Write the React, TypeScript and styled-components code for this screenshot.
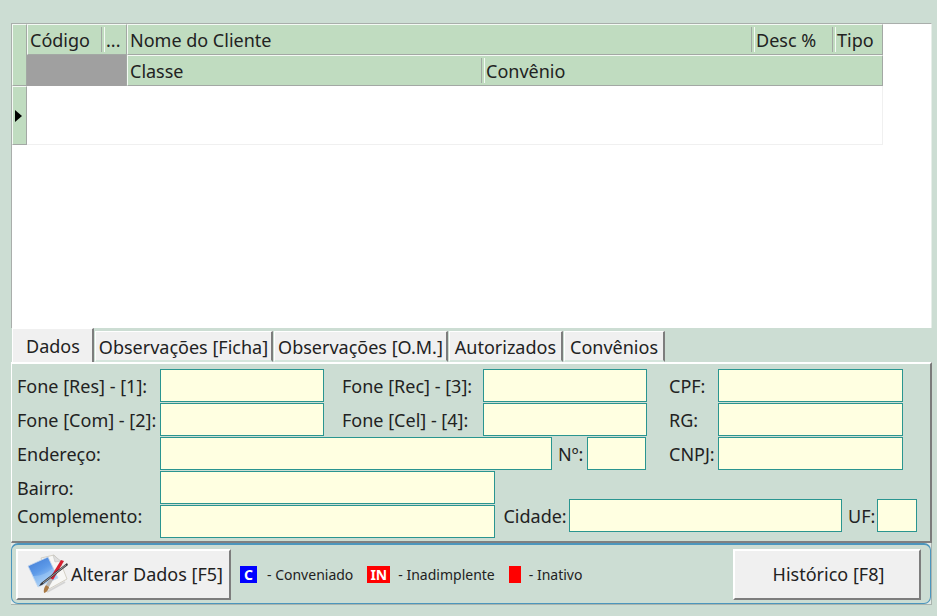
import React, { useState } from "react";
import styled, { createGlobalStyle } from "styled-components";

const GlobalStyle = createGlobalStyle`
  * { box-sizing: border-box; }
  body {
    margin: 0;
    background: #ccddd3;
    color: #222;
    font-family: "Noto Sans", "Open Sans", sans-serif;
    font-size: 18px;
    line-height: 24px;
  }
  button, input { font: inherit; color: inherit; }
`;

const Page = styled.main`
  display: flex;
  flex-direction: column;
  min-height: 100vh;
  padding: 23px 5px 11px 11px;
`;

const GridPanel = styled.section`
  flex: 1;
  min-height: 200px;
  background: #fff;
  border: 1px solid #a9aeab;
  border-right-color: #e6eee9;
  border-bottom: 0;
`;

const ClientTable = styled.table`
  width: calc(100% - 48px);
  table-layout: fixed;
  border-collapse: separate;
  border-spacing: 0;
`;

const Col = styled.col<{ $w?: number }>`
  width: ${(p) => (p.$w ? `${p.$w}px` : "auto")};
`;

const HeadCell = styled.th<{ $divider?: boolean; $last?: boolean }>`
  position: relative;
  height: 31px;
  padding: ${(p) => (p.$divider ? "0 4px" : "0 2px")};
  background: #c0dcc0;
  border-top: 1px solid #f4faf4;
  border-bottom: 1px solid #a3a8a4;
  border-left: ${(p) => (p.$divider ? "0" : "1px solid #f4faf4")};
  border-right: ${(p) => (p.$last ? "1px solid #a3a8a4" : "0")};
  font-weight: 400;
  text-align: left;
  white-space: nowrap;

  &::before {
    content: "";
    display: ${(p) => (p.$divider ? "block" : "none")};
    position: absolute;
    left: -1px;
    top: 2px;
    bottom: 2px;
    width: 2px;
    border-left: 1px solid #a3a8a4;
    border-right: 1px solid #f4faf4;
  }
`;

const BlankHead = styled.td`
  background: #a0a0a0;
  border-right: 1px solid #a3a8a4;
  padding: 0;
`;

const Indicator = styled.td`
  height: 59px;
  padding: 0 0 0 2px;
  background: #c0dcc0;
  border: 1px solid #a3a8a4;
  border-top-color: #f4faf4;
  border-left-color: #f4faf4;
  line-height: 0;
`;

const IndicatorHead = styled(Indicator)`
  height: 62px;
`;

const RecordCell = styled.td`
  padding: 0;
  border-right: 1px solid #f0f0f0;
  border-bottom: 1px solid #f0f0f0;
`;

const TabList = styled.div`
  display: flex;
  align-items: flex-end;
  height: 34px;
`;

const Tab = styled.button<{ $active: boolean; $pad: number }>`
  height: ${(p) => (p.$active ? "34px" : "31px")};
  padding: ${(p) => (p.$active ? "0 12px 0 13px" : `2px ${p.$pad}px 0`)};
  margin-left: 1px;
  background: #f0f0f0;
  border: 1px solid #fff;
  border-right: 2px solid #7d7d7d;
  border-bottom: ${(p) => (p.$active ? "0" : "2px solid #d5e5dc")};
  line-height: 24px;
  white-space: nowrap;
`;

const DataPanel = styled.form`
  display: flex;
  flex-direction: column;
  gap: 1px;
  padding: 5px 0 3px 5px;
  border-style: solid;
  border-width: 2px 2px 2px 1px;
  border-color: #fff #7b7b7b #808080 #fff;
`;

const PhoneGrid = styled.div`
  display: grid;
  grid-template-columns: 143px 164fr 159px 164fr 71px 185fr;
  grid-auto-rows: 33px;
  gap: 1px 0;
  align-items: center;
  padding-right: 27px;
`;

const AddressLine = styled.div`
  grid-column: 2 / 5;
  display: grid;
  grid-template-columns: 1fr 35px 59px;
  align-items: center;
  padding-right: 1px;
`;

const PlaceGrid = styled.div`
  display: grid;
  grid-template-columns: 143px 335fr 421fr;
  padding-right: 13px;
`;

const LabelStack = styled.div`
  display: grid;
  grid-template-rows: 33px 24px;
  align-items: center;
`;

const FieldStack = styled.div`
  display: grid;
  grid-template-rows: 33px 33px;
  gap: 1px;
`;

const CityLine = styled.div`
  display: grid;
  grid-template-columns: 74px 1fr 35px 40px;
  align-items: center;
  align-self: end;
  padding-bottom: 6px;
`;

const Label = styled.label<{ $indent?: number }>`
  padding-left: ${(p) => p.$indent ?? 0}px;
  white-space: nowrap;
`;

const Field = styled.input`
  width: 100%;
  min-width: 0;
  height: 33px;
  padding: 0 4px;
  background: #ffffe1;
  border: 1px solid #2a9590;
  border-radius: 0;
  outline: 0;
`;

const Footer = styled.footer`
  display: flex;
  background: #e4ebe7;
  border: solid #a9b4ae;
  border-width: 0 1px 1px 0;
`;

const FooterInner = styled.div`
  flex: 1;
  display: flex;
  align-items: center;
  height: 61px;
  padding: 0 9px 0 4px;
  background: #ccddd3;
  border: 2px solid #4c96bd;
  border-width: 2px 1px 1px;
  border-radius: 7px;
`;

const ActionButton = styled.button<{ $w: number }>`
  display: flex;
  align-items: center;
  justify-content: center;
  gap: 3px;
  width: ${(p) => p.$w}px;
  height: 51px;
  padding: 0 0 0 3px;
  background: #f0f0f0;
  border: 2px solid;
  border-color: #fff #7d7d7d #7d7d7d #fff;
  white-space: nowrap;
`;

const Legend = styled.ul`
  flex: 1;
  display: flex;
  align-items: center;
  gap: 14px;
  margin: 0;
  padding: 0 0 0 9px;
  list-style: none;
  font-size: 14px;
  line-height: 17px;
`;

const LegendItem = styled.li<{ $gap: number }>`
  display: flex;
  gap: ${(p) => p.$gap}px;
  white-space: nowrap;
`;

const Badge = styled.b<{ $color: string; $w: number }>`
  width: ${(p) => p.$w}px;
  height: 17px;
  background: ${(p) => p.$color};
  color: #fff;
  text-align: center;
`;

const PaperIcon = () => (
  <svg width="41" height="41" viewBox="0 0 41 41" aria-hidden="true">
    <defs>
      <linearGradient id="sheet" x1="0" y1="0" x2="0.6" y2="1">
        <stop offset="0" stopColor="#3f78d2" />
        <stop offset="0.5" stopColor="#5d9ae8" />
        <stop offset="1" stopColor="#b5d8fa" />
      </linearGradient>
    </defs>
    <path d="M14 4 27 1 33 7 40 25 22 35Z" fill="#f7f7f5" stroke="#d4d0c5" />
    <path d="M26 1 28 8 34 7Z" fill="#dedede" stroke="#c3c3bf" strokeWidth="0.6" />
    <path d="M1 12 21 3 31 24 11 33Z" fill="url(#sheet)" stroke="#c4d6ec" strokeWidth="0.8" />
    <path d="M5 22Q16 23 26 14L31 24 11 33Z" fill="#b5dafa" opacity="0.35" />
    <path d="M20 38 38 28" stroke="#aaa" strokeWidth="2" opacity="0.4" />
    <path d="m34 6 3 1-11 19-3-2Z" fill="#d51f30" />
    <path d="m23 24 3 2-4 7-3-2Z" fill="#b9b9b9" />
    <path d="M19 31 22 33Q21 38 17 39Q16 35 19 31Z" fill="#a97843" />
    <path d="m40 9 1 2-26 20-3 1 2-3Z" fill="#3a3a3e" />
    <path d="M16 29 39 11" stroke="#c4c4c8" strokeWidth="0.7" />
  </svg>
);

const tabs = [
  { name: "Dados", pad: 3 },
  { name: "Observações [Ficha]", pad: 3 },
  { name: "Observações [O.M.]", pad: 3 },
  { name: "Autorizados", pad: 5 },
  { name: "Convênios", pad: 5 },
];

export default function App() {
  const [active, setActive] = useState(0);

  return (
    <>
      <GlobalStyle />
      <Page>
        <GridPanel>
          <ClientTable>
            <colgroup>
              <Col $w={15} />
              <Col $w={75} />
              <Col $w={25} />
              <Col $w={355} />
              <Col />
              <Col $w={81} />
              <Col $w={50} />
            </colgroup>
            <thead>
              <tr>
                <IndicatorHead rowSpan={2} />
                <HeadCell>Código</HeadCell>
                <HeadCell $divider $last>...</HeadCell>
                <HeadCell colSpan={2}>Nome do Cliente</HeadCell>
                <HeadCell $divider>Desc %</HeadCell>
                <HeadCell $divider $last>Tipo</HeadCell>
              </tr>
              <tr>
                <BlankHead colSpan={2} />
                <HeadCell>Classe</HeadCell>
                <HeadCell $divider $last colSpan={3}>Convênio</HeadCell>
              </tr>
            </thead>
            <tbody>
              <tr>
                <Indicator>
                  <svg width="7" height="12" viewBox="0 0 7 12" aria-hidden="true">
                    <path d="M0 0 7 6 0 12Z" fill="#000" />
                  </svg>
                </Indicator>
                <RecordCell colSpan={6} />
              </tr>
            </tbody>
          </ClientTable>
        </GridPanel>

        <TabList role="tablist">
          {tabs.map(({ name, pad }, i) => (
            <Tab key={name} type="button" role="tab" aria-selected={i === active} $active={i === active} $pad={pad} onClick={() => setActive(i)}>
              {name}
            </Tab>
          ))}
        </TabList>

        <DataPanel>
          <PhoneGrid>
            <Label htmlFor="res">Fone [Res] - [1]:</Label>
            <Field id="res" />
            <Label htmlFor="rec" $indent={18}>Fone [Rec] - [3]:</Label>
            <Field id="rec" />
            <Label htmlFor="cpf" $indent={22}>CPF:</Label>
            <Field id="cpf" />
            <Label htmlFor="com">Fone [Com] - [2]:</Label>
            <Field id="com" />
            <Label htmlFor="cel" $indent={18}>Fone [Cel] - [4]:</Label>
            <Field id="cel" />
            <Label htmlFor="rg" $indent={22}>RG:</Label>
            <Field id="rg" />
            <Label htmlFor="end">Endereço:</Label>
            <AddressLine>
              <Field id="end" />
              <Label htmlFor="num" $indent={6}>Nº:</Label>
              <Field id="num" />
            </AddressLine>
            <Label htmlFor="cnpj" $indent={22}>CNPJ:</Label>
            <Field id="cnpj" />
          </PhoneGrid>
          <PlaceGrid>
            <LabelStack>
              <Label htmlFor="bairro">Bairro:</Label>
              <Label htmlFor="compl">Complemento:</Label>
            </LabelStack>
            <FieldStack>
              <Field id="bairro" />
              <Field id="compl" />
            </FieldStack>
            <CityLine>
              <Label htmlFor="cidade" $indent={8}>Cidade:</Label>
              <Field id="cidade" />
              <Label htmlFor="uf" $indent={6}>UF:</Label>
              <Field id="uf" />
            </CityLine>
          </PlaceGrid>
        </DataPanel>

        <Footer>
          <FooterInner>
            <ActionButton type="button" $w={215}>
              <PaperIcon />
              Alterar Dados [F5]
            </ActionButton>
            <Legend>
              <LegendItem $gap={10}><Badge $color="#0000ff" $w={17}>C</Badge>- Conveniado</LegendItem>
              <LegendItem $gap={8}><Badge $color="#ff0000" $w={23}>IN</Badge>- Inadimplente</LegendItem>
              <LegendItem $gap={8}><Badge $color="#ff0000" $w={12} />- Inativo</LegendItem>
            </Legend>
            <ActionButton type="button" $w={188}>Histórico [F8]</ActionButton>
          </FooterInner>
        </Footer>
      </Page>
    </>
  );
}
